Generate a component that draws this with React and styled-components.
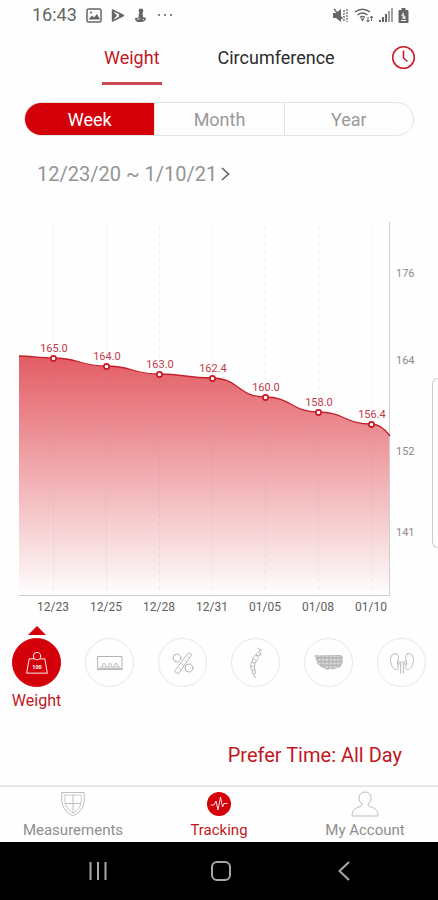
import React, { useState } from "react";
import styled, { createGlobalStyle } from "styled-components";

const GlobalStyle = createGlobalStyle`
  * {
    box-sizing: border-box;
  }

  body {
    margin: 0;
    background: #fefefe;
    font-family: Roboto, "Liberation Sans", sans-serif;
  }

  button {
    padding: 0;
    border: none;
    background: none;
    font-family: inherit;
    cursor: pointer;
  }

  svg {
    display: block;
  }
`;

const Screen = styled.div`
  position: relative;
  display: flex;
  flex-direction: column;
  min-height: 100vh;
  overflow: hidden;
`;

const StatusBar = styled.header`
  display: flex;
  justify-content: space-between;
  align-items: center;
  height: 30px;
  padding: 0 29px 0 32px;
  color: #666;
`;

const StatusGroup = styled.div`
  display: flex;
  align-items: center;
  gap: ${(props) => props.$gap}px;
`;

const Clock = styled.span`
  font-size: 18px;
  line-height: 20px;
`;

const Tabs = styled.div`
  display: flex;
  align-items: flex-start;
  height: 72px;
  padding: 15px 25px 0 102px;
`;

const Tab = styled.button`
  height: 40px;
  padding: 0 2px 12px;
  margin-right: 54px;
  border-bottom: 3px solid ${(props) => (props.$active ? "#c94a50" : "transparent")};
  color: ${(props) => (props.$active ? "#c01824" : "#2c2c2c")};
  font-size: 18px;
  line-height: 24px;
`;

const HistoryButton = styled.button`
  margin-left: auto;
`;

const Segments = styled.div`
  display: grid;
  grid-template-columns: repeat(3, 1fr);
  height: 34px;
  margin: 0 24px;
  border: 1px solid #e4e4e4;
  border-radius: 17px;
  overflow: hidden;
`;

const Segment = styled.button`
  border-left: 1px solid ${(props) => (props.$active ? "#d40009" : "#e4e4e4")};
  background: ${(props) => (props.$active ? "#d40009" : "transparent")};
  color: ${(props) => (props.$active ? "#fff" : "#999")};
  font-size: 18px;

  &:first-child {
    border-left: none;
  }
`;

const DateRange = styled.button`
  display: flex;
  align-items: center;
  align-self: flex-start;
  gap: 4px;
  margin: 26px 0 0 37px;
  color: #959595;
  font-size: 20px;
  line-height: 24px;
`;

const ChartSvg = styled.svg`
  width: 100%;
  margin-top: 30px;
  font-family: Roboto, "Liberation Sans", sans-serif;
  font-size: 11px;
`;

const Metrics = styled.div`
  display: grid;
  grid-template-columns: repeat(6, 1fr);
  margin-top: 10px;
`;

const Metric = styled.button`
  display: flex;
  flex-direction: column;
  align-items: center;
  color: #c01824;
  font-size: 16px;
  line-height: 20px;
`;

const Pointer = styled.span`
  height: 9px;
  margin-bottom: 3px;
  border: 9px solid transparent;
  border-top: none;
  border-bottom-color: ${(props) => (props.$active ? "#d40009" : "transparent")};
`;

const MetricCircle = styled.span`
  display: flex;
  justify-content: center;
  align-items: center;
  width: 49px;
  height: 49px;
  margin-bottom: 4px;
  border: 1px solid ${(props) => (props.$active ? "#d40009" : "#e6e6e6")};
  border-radius: 50%;
  background: ${(props) => (props.$active ? "#d40009" : "transparent")};
  color: ${(props) => (props.$active ? "#fff" : "#b4b4b4")};
`;

const PreferTime = styled.p`
  margin: 0;
  padding: 32px 36px 18px;
  color: #c01824;
  font-size: 20px;
  line-height: 24px;
  text-align: right;
`;

const BottomNav = styled.nav`
  display: grid;
  grid-template-columns: repeat(3, 1fr);
  height: 57px;
  margin-top: auto;
  border-top: 2px solid #e8e8e8;
`;

const NavLink = styled.a`
  display: flex;
  flex-direction: column;
  align-items: center;
  gap: 4px;
  padding-top: 4px;
  color: ${(props) => (props.$active ? "#c01824" : "#8e8e8e")};
  font-size: 15px;
  line-height: 18px;
  text-decoration: none;
`;

const SystemBar = styled.footer`
  display: grid;
  grid-template-columns: repeat(3, 1fr);
  height: 58px;
  padding: 0 33px 0 36px;
  background: #000;
`;

const SystemButton = styled.button`
  display: flex;
  justify-content: center;
  align-items: center;
`;

const EdgeHandle = styled.div`
  position: absolute;
  top: 378px;
  right: 0;
  width: 6px;
  height: 170px;
  border: 1px solid #ccc;
  border-right: none;
  border-radius: 6px 0 0 6px;
  background: #fff;
`;

const entries = [
  { x: 53, y: 358, date: "12/23", value: "165.0" },
  { x: 106, y: 366, date: "12/25", value: "164.0" },
  { x: 159, y: 374, date: "12/28", value: "163.0" },
  { x: 212, y: 378, date: "12/31", value: "162.4" },
  { x: 265, y: 397, date: "01/05", value: "160.0" },
  { x: 318, y: 412, date: "01/08", value: "158.0" },
  { x: 371, y: 424, date: "01/10", value: "156.4" },
];

const scale = [
  { y: 273, label: "176" },
  { y: 360, label: "164" },
  { y: 451, label: "152" },
  { y: 532, label: "141" },
];

function buildCurve() {
  let d = "M19 356 C30 356 40 358 53 358";
  for (let i = 1; i < entries.length; i++) {
    const a = entries[i - 1];
    const b = entries[i];
    const mid = (a.x + b.x) / 2;
    d += ` C${mid} ${a.y} ${mid} ${b.y} ${b.x} ${b.y}`;
  }
  return d + " C379 424 385 429 390 436";
}

function WeightChart() {
  const curve = buildCurve();

  return (
    <ChartSvg viewBox="0 216 438 400" role="img" aria-label="Weight">
      <defs>
        <linearGradient id="fill" gradientUnits="userSpaceOnUse" x1="0" y1="356" x2="0" y2="595">
          <stop offset="0" stopColor="#d7101c" stopOpacity="0.68" />
          <stop offset="1" stopColor="#d7101c" stopOpacity="0" />
        </linearGradient>
      </defs>
      <path d={`${curve} V595 H19 Z`} fill="url(#fill)" />
      {entries.map((e) => (
        <path
          key={e.date}
          d={`M${e.x + 0.5} 226 V595`}
          stroke="#888"
          strokeOpacity="0.12"
          strokeDasharray="5 3"
        />
      ))}
      <path d="M18.5 595.5 H389.5 V222" fill="none" stroke="#cfcfcf" />
      <path d={curve} fill="none" stroke="#c4202b" strokeWidth="1.3" />
      {entries.map((e) => (
        <g key={e.date} textAnchor="middle">
          <circle cx={e.x + 0.5} cy={e.y + 0.5} r="2.6" fill="#fff" stroke="#cb1420" strokeWidth="1.6" />
          <text x={e.x + 1} y={e.y - 6} fill="#c23a48">
            {e.value}
          </text>
          <text x={e.x} y="611" fill="#606060" fontSize="12">
            {e.date}
          </text>
        </g>
      ))}
      {scale.map((s) => (
        <text key={s.label} x="396" y={s.y + 4} fill="#8c8c8c">
          {s.label}
        </text>
      ))}
    </ChartSvg>
  );
}

const stroke = {
  fill: "none",
  stroke: "currentColor",
  strokeLinecap: "round",
  strokeLinejoin: "round",
};

function KettleIcon() {
  return (
    <svg width="24" height="24" viewBox="0 0 26 26" {...stroke}>
      <circle cx="13" cy="5.5" r="4" />
      <path d="M9.5 8.5 H4.5 L1.8 24 H24.2 L21.5 8.5 H16.5" />
      <text x="13" y="19" textAnchor="middle" fontSize="6" fontWeight="700" fill="currentColor" stroke="none">
        100
      </text>
    </svg>
  );
}

function RulerIcon() {
  return (
    <svg width="26" height="16" viewBox="0 0 26 16" {...stroke}>
      <path d="M1 1.5 H25 V14 H1 Z" />
      <path d="M3 12 H23 M5 11 L7 8 L9 11 M11 11 L13 8 L15 11 M17 11 L19 8 L21 11" strokeWidth="0.9" />
      <path d="M1 14.3 H25" strokeWidth="1.5" />
    </svg>
  );
}

function PercentIcon() {
  return (
    <svg width="24" height="24" viewBox="0 0 24 24" {...stroke}>
      <circle cx="6" cy="7" r="4" />
      <circle cx="18" cy="17" r="4" />
      <path d="M17 2.5 Q20 1 20.5 4 L8 22 Q4 23 4 20 Z" strokeWidth="0.9" />
      <path d="M17 6 L18.5 7 M14 9.5 L15.5 11 M11 13 L12.5 14.5 M8 17 L9.5 18.5" strokeWidth="0.8" />
    </svg>
  );
}

function SpineIcon() {
  return (
    <svg width="18" height="34" viewBox="0 0 18 34" {...stroke} strokeWidth="0.9">
      <path d="M11 2 Q14 3 12.5 6 L14 7 L12 10 L9 9 L11.5 6" />
      <path d="M9 9 L11.5 12 L9.5 15 L6 12.5 Z" />
      <path d="M6 12.5 L5 15 L8 17.5 L9.5 15" />
      <path d="M5 16 L8 17.5 L7.5 21 L4 20 Z" />
      <path d="M4 20 L3.5 22 L5 24 L8 24 L7.5 21" />
      <path d="M5 24 L6 28 L8.5 27.5 L8 24 M6 28 L8 31.5 L9 31" />
      <path d="M13 4 L14.5 4 M13 8.5 L14.5 9" />
    </svg>
  );
}

function MuscleIcon() {
  return (
    <svg width="30" height="17" viewBox="0 0 32 18" {...stroke} strokeWidth="0.9">
      <defs>
        <pattern id="cells" width="4" height="4" patternUnits="userSpaceOnUse">
          <path d="M0 1 L2 0 L4 1 V3 L2 4 L0 3 Z" fill="#e2e2e2" stroke="#999" strokeWidth="0.9" />
        </pattern>
      </defs>
      <path
        d="M1 2 Q3 0.5 5 2 L27 1.5 Q31 1 30 5 Q31 9 29 11 Q28 15 24 14 Q21 17.5 18 15 Q14 17.5 11 14.5 Q7 14.5 6 11.5 Q3 11 4 8 Q1 6 2.5 4 Z"
        fill="url(#cells)"
      />
    </svg>
  );
}

function KidneysIcon() {
  return (
    <svg width="26" height="22" viewBox="0 0 28 24" {...stroke}>
      <path d="M8 2 C2 0.5 0.5 7 2 12 C3 17 6 20 9 19 C11.5 18 9 15 9 12 C9 9 12 4 8 2 Z" />
      <path d="M20 2 C26 0.5 27.5 7 26 12 C25 17 22 20 19 19 C16.5 18 19 15 19 12 C19 9 16 4 20 2 Z" />
      <path d="M9.5 10 Q12 12 14 11 Q16 12 18.5 10 M12.5 13 V23 M15.5 13 V23 M10 13 H12.5 M15.5 13 H18" />
    </svg>
  );
}

function ShieldIcon() {
  return (
    <svg width="26" height="26" viewBox="0 0 26 26" {...stroke} stroke="#c0c0c0">
      <path d="M2 1.5 H24 Q27 19 13 25 Q-1 19 2 1.5 Z" />
      <path d="M5 4 H21 Q23 17 13 22 Q3 17 5 4 Z" strokeWidth="0.8" />
      <path d="M13 4 V22 M5 12.5 H21" />
    </svg>
  );
}

function PulseIcon() {
  return (
    <svg width="26" height="26" viewBox="0 0 26 26" {...stroke}>
      <circle cx="13" cy="13" r="12" fill="#d40009" stroke="none" />
      <path d="M5 14 H8 L10 10 L12 19 L14.5 6 L16.5 16 L18 12.5 H21" stroke="#fff" strokeWidth="0.9" />
    </svg>
  );
}

function PersonIcon() {
  return (
    <svg width="28" height="26" viewBox="0 0 28 26" {...stroke} stroke="#bcbcbc">
      <path d="M11 13 C6 10 7 1 14 1 C21 1 22 10 17 13 C17 15 18 15.5 20 16 C25 17.5 27 20 27 25 H1 C1 20 3 17.5 8 16 C10 15.5 11 15 11 13 Z" />
    </svg>
  );
}

function StatusLeftIcons() {
  return (
    <>
      <svg width="16" height="15" viewBox="0 0 16 15">
        <rect x="1" y="1" width="14" height="13" rx="1.5" fill="none" stroke="currentColor" strokeWidth="1.5" />
        <path d="M2.5 11.5 L6 7.5 L8 9.5 L11 6 L14 11.5 Z" fill="currentColor" />
        <circle cx="5" cy="4.5" r="1" fill="currentColor" />
      </svg>
      <svg width="14" height="15" viewBox="0 0 14 15">
        <path d="M1.5 2 L12.5 7.5 L1.5 13 Z" fill="none" stroke="currentColor" strokeWidth="1.4" strokeLinejoin="round" />
        <path d="M1 2 L6 7.5 L1 13 Z M8 5 L12 7.5 L8 10 Z" fill="currentColor" />
      </svg>
      <svg width="13" height="15" viewBox="0 0 13 15" fill="currentColor">
        <circle cx="7" cy="3" r="2.4" />
        <path d="M5 5 H8.5 L9 9 L12 10 Q12 13 8 14 H4 Q1 13.5 1 10 L4.5 9.5 Z" />
        <path d="M3 11.5 L6 10.5 M8.5 12 L10 11" stroke="#fff" strokeWidth="0.8" />
      </svg>
      <svg width="18" height="4" viewBox="0 0 18 4" fill="currentColor">
        <circle cx="3" cy="2" r="1.1" />
        <circle cx="9" cy="2" r="1.1" />
        <circle cx="15" cy="2" r="1.1" />
      </svg>
    </>
  );
}

function StatusRightIcons() {
  return (
    <>
      <svg width="17" height="15" viewBox="0 0 17 15">
        <path d="M1 5 H4 L9 1 V14 L4 10 H1 Z" fill="currentColor" />
        <path d="M2 1 L10.5 11" stroke="currentColor" strokeWidth="1.4" />
        <path d="M12 2 V14 M15 1 V14" stroke="currentColor" strokeWidth="1.3" strokeDasharray="2 1" />
      </svg>
      <svg width="20" height="15" viewBox="0 0 20 15" fill="none" stroke="currentColor" strokeWidth="1.5">
        <path d="M1 4 Q8.5 -1.5 16 4 M3.5 7 Q8.5 3 13.5 7 M6 9.5 Q8.5 7.5 11 9.5" />
        <path d="M6.5 10.5 H10.5 L8.5 13.5 Z" fill="currentColor" stroke="none" />
        <path d="M14 9 V14 M12.5 12 L14 14 L15.5 12 M17.5 13 V8 M16 10 L17.5 8 L19 10" strokeWidth="1" />
      </svg>
      <svg width="14" height="14" viewBox="0 0 14 14" fill="currentColor">
        <path d="M0 12 H2 V14 H0 Z M3 9 H5 V14 H3 Z M6 6 H8 V14 H6 Z" />
        <path d="M9 3 H11 V14 H9 Z M12 0 H14 V14 H12 Z" opacity="0.6" />
      </svg>
      <svg width="11" height="15" viewBox="0 0 11 15" fill="currentColor">
        <path d="M3.5 0 H7.5 V2 H9.5 Q10.5 2 10.5 3 V14 Q10.5 15 9.5 15 H1.5 Q0.5 15 0.5 14 V3 Q0.5 2 1.5 2 H3.5 Z" />
        <path d="M5.5 4 L3 8 H4.5 V11 H7.5 V8 H6.5 Z" fill="#fff" opacity="0.8" />
        <path d="M3 12.5 H8" stroke="#fff" strokeWidth="1" />
      </svg>
    </>
  );
}

const periods = ["Week", "Month", "Year"];

const metrics = [
  { name: "Weight", Icon: KettleIcon },
  { name: "BMI", Icon: RulerIcon },
  { name: "Body Fat", Icon: PercentIcon },
  { name: "Bone", Icon: SpineIcon },
  { name: "Muscle", Icon: MuscleIcon },
  { name: "Visceral", Icon: KidneysIcon },
];

const pages = [
  { name: "Measurements", Icon: ShieldIcon },
  { name: "Tracking", Icon: PulseIcon },
  { name: "My Account", Icon: PersonIcon },
];

function App() {
  const [tab, setTab] = useState("Weight");
  const [period, setPeriod] = useState("Week");
  const [metric, setMetric] = useState("Weight");

  return (
    <Screen>
      <GlobalStyle />
      <StatusBar>
        <StatusGroup $gap={9}>
          <Clock>16:43</Clock>
          <StatusLeftIcons />
        </StatusGroup>
        <StatusGroup $gap={5}>
          <StatusRightIcons />
        </StatusGroup>
      </StatusBar>

      <Tabs>
        {["Weight", "Circumference"].map((name) => (
          <Tab key={name} $active={tab === name} onClick={() => setTab(name)}>
            {name}
          </Tab>
        ))}
        <HistoryButton aria-label="History">
          <svg width="25" height="25" viewBox="0 0 25 25" fill="none" stroke="#c9202b" strokeWidth="1.6">
            <circle cx="12.5" cy="12.5" r="10.8" />
            <path d="M12.5 5.5 V13 L16.5 16.5" />
          </svg>
        </HistoryButton>
      </Tabs>

      <Segments>
        {periods.map((name) => (
          <Segment key={name} $active={period === name} onClick={() => setPeriod(name)}>
            {name}
          </Segment>
        ))}
      </Segments>

      <DateRange>
        12/23/20 ~ 1/10/21
        <svg width="9" height="14" viewBox="0 0 9 14" fill="none" stroke="#666" strokeWidth="1.7">
          <path d="M1 1 L7.5 7 L1 13" />
        </svg>
      </DateRange>

      <WeightChart />

      <Metrics>
        {metrics.map(({ name, Icon }) => (
          <Metric key={name} aria-label={name} onClick={() => setMetric(name)}>
            <Pointer $active={metric === name} />
            <MetricCircle $active={metric === name}>
              <Icon />
            </MetricCircle>
            {metric === name && name}
          </Metric>
        ))}
      </Metrics>

      <PreferTime>Prefer Time: All Day</PreferTime>

      <BottomNav>
        {pages.map(({ name, Icon }) => (
          <NavLink key={name} href="#" $active={name === "Tracking"}>
            <Icon />
            {name}
          </NavLink>
        ))}
      </BottomNav>

      <SystemBar>
        <SystemButton aria-label="Recent apps">
          <svg width="20" height="20" viewBox="0 0 20 20" stroke="#a8a8a8" strokeWidth="2">
            <path d="M2.5 1 V19 M10 1 V19 M17.5 1 V19" />
          </svg>
        </SystemButton>
        <SystemButton aria-label="Home">
          <svg width="20" height="20" viewBox="0 0 20 20" fill="none" stroke="#a8a8a8" strokeWidth="2">
            <rect x="1" y="1" width="18" height="18" rx="5" />
          </svg>
        </SystemButton>
        <SystemButton aria-label="Back">
          <svg width="12" height="20" viewBox="0 0 12 20" fill="none" stroke="#a8a8a8" strokeWidth="2">
            <path d="M11 1 L1.5 10 L11 19" />
          </svg>
        </SystemButton>
      </SystemBar>

      <EdgeHandle />
    </Screen>
  );
}

export default App;
